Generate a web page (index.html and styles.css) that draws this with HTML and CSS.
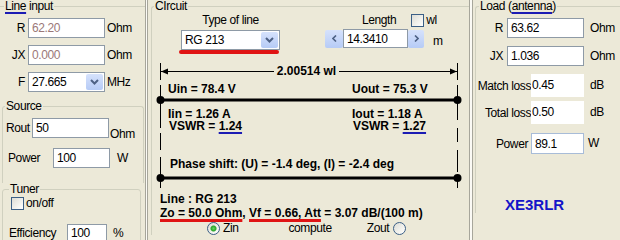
FILE: index.html
```html
<!DOCTYPE html>
<html lang="en">
<head>
  <meta charset="UTF-8">
  <meta name="viewport" content="width=device-width, initial-scale=1.0">
  <title>Transmission Line Calculator</title>
  <link rel="stylesheet" href="styles.css">
</head>
<body>

  <div class="window">

    <!-- Left side: line input, source, tuner -->
    <div class="panel panel-left">
      <fieldset class="group group-line">
        <legend><span class="ul-blue">Line</span> input</legend>
        <div class="rows">
          <div class="row">
            <span class="lbl-line">R</span>
            <input class="edit edit-line edit-dim" type="text" value="62.20" readonly>
            <span class="unit">Ohm</span>
          </div>
          <div class="row">
            <span class="lbl-line">JX</span>
            <input class="edit edit-line edit-dim" type="text" value="0.000" readonly>
            <span class="unit">Ohm</span>
          </div>
          <div class="row">
            <span class="lbl-line">F</span>
            <div class="combo combo-freq">
              <span class="combo-text">27.665</span>
              <span class="combo-btn">
                <svg width="9" height="6" viewBox="0 0 9 6"><path d="M1 1 L4.5 4.5 L8 1" fill="none" stroke="#4d6185" stroke-width="2"/></svg>
              </span>
            </div>
            <span class="unit">MHz</span>
          </div>
        </div>
      </fieldset>

      <fieldset class="group group-source">
        <legend>Source</legend>
        <div class="row row-rout">
          <span class="lbl-rout">Rout</span>
          <input class="edit edit-rout" type="text" value="50">
          <span class="unit unit-low">Ohm</span>
        </div>
        <div class="row row-power">
          <span class="lbl-power">Power</span>
          <input class="edit edit-power" type="text" value="100">
          <span class="unit unit-w">W</span>
        </div>
      </fieldset>

      <fieldset class="group group-tuner">
        <legend>Tuner</legend>
        <div class="row row-check">
          <span class="check"></span>
          <span class="check-text">on/off</span>
        </div>
        <div class="row row-eff">
          <span class="lbl-eff">Efficiency</span>
          <input class="edit edit-eff" type="text" value="100">
          <span class="unit unit-pct">%</span>
        </div>
      </fieldset>
    </div>

    <div class="splitter"></div>

    <!-- Middle: circuit drawing -->
    <div class="panel panel-circuit">
      <fieldset class="group group-circuit">
        <legend>CIrcuit</legend>

        <div class="circuit-head">
          <div class="line-type">
            <div class="caption">Type of line</div>
            <div class="combo combo-line">
              <span class="combo-text">RG 213</span>
              <span class="combo-btn">
                <svg width="9" height="6" viewBox="0 0 9 6"><path d="M1 1 L4.5 4.5 L8 1" fill="none" stroke="#4d6185" stroke-width="2"/></svg>
              </span>
            </div>
            <div class="red-mark"></div>
          </div>

          <div class="length">
            <div class="length-top">
              <span class="length-caption">Length</span>
              <span class="check check-wl"></span>
              <span class="check-text">wl</span>
            </div>
            <div class="spin-row">
              <span class="spin-btn spin-left">
                <svg width="5" height="7" viewBox="0 0 5 7"><path d="M4 0.5 L1 3.5 L4 6.5" fill="none" stroke="#4d6185" stroke-width="1.6"/></svg>
              </span>
              <input class="edit edit-length" type="text" value="14.3410">
              <span class="spin-btn spin-right">
                <svg width="5" height="7" viewBox="0 0 5 7"><path d="M1 0.5 L4 3.5 L1 6.5" fill="none" stroke="#4d6185" stroke-width="1.6"/></svg>
              </span>
              <span class="unit unit-m">m</span>
            </div>
          </div>
        </div>

        <div class="schematic">
          <svg class="wires" width="306" height="132" viewBox="0 0 306 132">
            <g stroke="#000" stroke-width="1" fill="none">
              <line x1="5" y1="11.5" x2="301" y2="11.5"/>
              <path d="M4.5 3 V20 M4.5 25 V37 M4.5 40 V68 M4.5 73 V90 M4.5 97 V115 M4.5 118 V128"/>
              <path d="M301.5 3 V20 M301.5 25 V37 M301.5 40 V60 M301.5 68 V82 M301.5 90 V112 M301.5 118 V128"/>
            </g>
            <polygon points="5,11.5 12,8.5 12,14.5"/>
            <polygon points="301,11.5 294,8.5 294,14.5"/>
            <g stroke="#000" stroke-width="3">
              <line x1="4" y1="40" x2="302" y2="40"/>
              <line x1="4" y1="118" x2="302" y2="118"/>
            </g>
            <circle cx="4.5" cy="40" r="4"/>
            <circle cx="301.5" cy="40" r="4"/>
            <circle cx="4.5" cy="118" r="4"/>
            <circle cx="301.5" cy="118" r="4"/>
          </svg>

          <div class="dimension"><span>2.00514 wl</span></div>
          <div class="readings">
            <span>Uin = 78.4 V</span>
            <span>Uout = 75.3 V</span>
          </div>
          <div class="readings readings-i">
            <span>Iin = 1.26 A</span>
            <span>Iout = 1.18 A</span>
          </div>
          <div class="readings readings-v">
            <span>VSWR = <span class="ul-blue">1.24</span></span>
            <span>VSWR = <span class="ul-blue">1.27</span></span>
          </div>
          <div class="phase">Phase shift: (U) = -1.4 deg, (I) = -2.4 deg</div>
        </div>

        <div class="line-info">
          <div>Line : RG 213</div>
          <div><span class="ul-red">Zo = 50.0 Ohm</span>, <span class="ul-red">Vf = 0.66, Att</span> = 3.07 dB/(100 m)</div>
        </div>

        <div class="compute-row">
          <span class="radio radio-on"></span>
          <span class="radio-text">Zin</span>
          <span class="compute">compute</span>
          <span class="radio-text zout-text">Zout</span>
          <span class="radio radio-zout"></span>
        </div>
      </fieldset>
    </div>

    <div class="splitter splitter-wide"></div>

    <!-- Right side: load -->
    <div class="panel panel-load">
      <fieldset class="group group-load">
        <legend>Load (<span class="ul-blue">antenna</span>)</legend>
        <div class="rows">
          <div class="row">
            <span class="lbl-load">R</span>
            <input class="edit edit-line" type="text" value="63.62">
            <span class="unit unit-load">Ohm</span>
          </div>
          <div class="row">
            <span class="lbl-load">JX</span>
            <input class="edit edit-line" type="text" value="1.036">
            <span class="unit unit-load">Ohm</span>
          </div>
          <div class="row row-loss">
            <span class="lbl-loss">Match loss</span>
            <span class="value-box">0.45</span>
            <span class="unit unit-load">dB</span>
          </div>
          <div class="row row-loss row-total">
            <span class="lbl-loss">Total loss</span>
            <span class="value-box">0.50</span>
            <span class="unit unit-load">dB</span>
          </div>
          <div class="row row-load-power">
            <span class="lbl-load-power">Power</span>
            <input class="edit edit-load-power" type="text" value="89.1">
            <span class="unit unit-load-w">W</span>
          </div>
        </div>
        <div class="callsign">XE3RLR</div>
      </fieldset>
    </div>

  </div>

</body>
</html>
```

FILE: styles.css
```css
/* styles.css */
body {
  margin: 0;
  width: 620px;
  height: 240px;
  overflow: hidden;
  background-color: #ece9d8;
  font-family: "Liberation Sans", Arial, sans-serif;
  font-size: 12px;
  letter-spacing: -0.4px;
  color: #000;
}

.window {
  display: flex;
  height: 240px;
  overflow: hidden;
}

.panel {
  flex: none;
  height: 240px;
  overflow: hidden;
}

.panel-left { width: 145px; }
.panel-circuit { width: 321px; }
.panel-load { width: 148px; }

.splitter {
  flex: none;
  width: 1px;
  border-left: 1px solid #a7a69b;
  border-right: 1px solid #a7a69b;
  background-color: #fbfaf5;
}

.splitter-wide {
  width: 2px;
}

/* group boxes */
.group {
  box-sizing: border-box;
  margin: 0;
  padding: 0;
  min-width: 0;
  border: 1px solid #d0d0bf;
  border-radius: 3px;
}

.group legend {
  padding: 0 1px;
  line-height: 13px;
}

.row {
  display: flex;
  align-items: center;
  height: 20px;
}

.rows {
  padding-top: 5px;
}

.unit {
  line-height: 13px;
  margin-left: 2px;
}

.ul-blue {
  text-decoration: underline;
  text-decoration-color: #1c1cb4;
  text-decoration-thickness: 2px;
  text-underline-offset: 2px;
  text-decoration-skip-ink: none;
}

.ul-red {
  text-decoration: underline;
  text-decoration-color: #e01414;
  text-decoration-thickness: 3px;
  text-underline-offset: 2px;
  text-decoration-skip-ink: none;
}

/* edit boxes */
.edit {
  box-sizing: border-box;
  height: 20px;
  margin: 0;
  padding: 0 3px;
  border: 1px solid #8e9aa6;
  background-color: #fff;
  font: inherit;
  letter-spacing: inherit;
  color: #000;
  outline: none;
}

.edit-line { width: 77px; }
.edit-dim { color: #9b7878; }

.combo {
  box-sizing: border-box;
  display: flex;
  height: 20px;
  padding: 1px;
  border: 1px solid #8e9aa6;
  background-color: #fff;
}

.combo-text {
  flex: 1;
  padding-left: 2px;
  line-height: 16px;
}

.combo-btn,
.spin-btn {
  display: flex;
  align-items: center;
  justify-content: center;
  border-radius: 2px;
  background: linear-gradient(#d6e2fc, #b6cbf6);
}

.combo-btn { width: 17px; }

.check {
  box-sizing: border-box;
  width: 13px;
  height: 13px;
  border: 1px solid #3b5f86;
  background: linear-gradient(135deg, #dcdcd5 0%, #f4f4f0 65%, #fff 100%);
}

.radio {
  box-sizing: border-box;
  width: 13px;
  height: 13px;
  border: 1px solid #3b5f86;
  border-radius: 50%;
  background: linear-gradient(135deg, #dcdcd5 0%, #f4f4f0 65%, #fff 100%);
}

.radio-on {
  background: radial-gradient(circle, #63d663 0, #2aa52a 2.5px, rgba(0, 0, 0, 0) 3.5px),
    linear-gradient(135deg, #dcdcd5 0%, #f4f4f0 65%, #fff 100%);
}

/* left panel */
.group-line {
  border-width: 1px 0 0 0;
  border-radius: 0;
}

.group-line legend { margin-left: 4px; }
.group-line .row { margin-bottom: 7px; }

.lbl-line {
  width: 25px;
  margin-right: 3px;
  text-align: right;
}

.combo-freq { width: 77px; }

.group-source {
  width: 142px;
  height: 83px;
  margin: 1px 0 0 2px;
  border-bottom: 0;
  border-radius: 3px 3px 0 0;
}

.group-source legend { margin-left: 2px; }

.row-rout {
  margin-top: 5px;
  padding-left: 3px;
}

.lbl-rout { width: 26px; }
.edit-rout { width: 77px; }

.unit-low {
  align-self: flex-end;
  margin-left: 1px;
  margin-bottom: -3px;
}

.row-power {
  margin-top: 10px;
  padding-left: 5px;
}

.lbl-power { width: 45px; }
.edit-power { width: 57px; }
.unit-w { margin-left: 7px; }

.group-tuner {
  width: 139px;
  height: 70px;
  margin-left: 2px;
}

.group-tuner legend { margin-left: 6px; }

.row-check {
  height: 13px;
  margin-top: 1px;
  padding-left: 8px;
}

.check-text {
  margin-left: 2px;
  line-height: 13px;
}

.row-eff {
  height: 18px;
  margin-top: 14px;
  padding-left: 6px;
}

.lbl-eff { width: 58px; }

.edit-eff {
  width: 40px;
  height: 18px;
}

.unit-pct { margin-left: 6px; }

/* circuit panel */
.group-circuit {
  width: 318px;
  margin-left: 3px;
  border-width: 1px 0 0 1px;
  border-radius: 3px 0 0 0;
}

.group-circuit legend { margin-left: 2px; }

.circuit-head {
  display: flex;
  align-items: flex-start;
}

.line-type {
  width: 99px;
  margin-left: 29px;
}

.caption {
  margin-top: 1px;
  line-height: 13px;
  text-align: center;
}

.combo-line { margin-top: 3px; }

.red-mark {
  width: 100px;
  height: 4px;
  margin-left: -2px;
  border-radius: 2px;
  background-color: #e01414;
}

.length { margin-left: 45px; }

.length-top {
  display: flex;
  align-items: center;
  height: 14px;
}

.length-caption {
  margin-left: 37px;
  line-height: 13px;
}

.check-wl { margin-left: 15px; }

.spin-row {
  display: flex;
  align-items: center;
  height: 19px;
  margin-top: 2px;
}

.spin-btn {
  height: 18px;
}

.spin-left { width: 18px; }
.spin-right { width: 16px; }

.edit-length {
  width: 65px;
  height: 19px;
}

.unit-m {
  margin-left: 9px;
  margin-top: 5px;
}

/* schematic drawing */
.schematic {
  position: relative;
  z-index: 0;
  box-sizing: border-box;
  width: 306px;
  height: 132px;
  margin: 6px 0 0 4px;
  padding-top: 5px;
  font-size: 12px;
  font-weight: bold;
  letter-spacing: normal;
  line-height: 12px;
}

.wires {
  position: absolute;
  top: 0;
  left: 0;
  z-index: -1;
}

.dimension {
  padding-right: 5px;
  text-align: center;
}

.dimension span {
  padding: 0 3px;
  background-color: #ece9d8;
}

.readings {
  display: grid;
  grid-template-columns: 184px auto;
  margin-top: 6px;
  padding-left: 12px;
}

.readings-i { margin-top: 13px; }

.readings-v {
  margin-top: 0;
  padding-left: 13px;
}

.phase {
  margin-top: 26px;
  padding-left: 14px;
}

.line-info {
  padding-left: 8px;
  font-size: 12px;
  font-weight: bold;
  letter-spacing: normal;
  line-height: 14px;
}

.compute-row {
  display: flex;
  align-items: center;
  height: 14px;
  margin-top: 1px;
  padding-left: 55px;
  line-height: 13px;
}

.radio-text { margin-left: 3px; }
.compute { margin-left: 50px; }
.zout-text { margin-left: 35px; }
.radio-zout { margin-left: 4px; }

/* load panel */
.group-load {
  width: 146px;
  margin-left: 2px;
  border-width: 1px 0 0 1px;
  border-radius: 3px 0 0 0;
}

.group-load legend { margin-left: 3px; }
.group-load .row { margin-bottom: 8px; }

.lbl-load {
  width: 27px;
  margin-right: 4px;
  text-align: right;
}

.unit-load { margin-left: 6px; }

.group-load .row-loss {
  height: 23px;
  margin-bottom: 4px;
}

.group-load .row-total { margin-bottom: 9px; }

.lbl-loss {
  width: 55px;
  text-align: right;
  white-space: nowrap;
}

.value-box {
  box-sizing: border-box;
  width: 53px;
  height: 23px;
  padding-left: 1px;
  line-height: 23px;
  background-color: #fff;
}

.group-load .row-load-power { height: 21px; }

.lbl-load-power {
  width: 52px;
  margin-right: 3px;
  text-align: right;
}

.edit-load-power {
  width: 53px;
  height: 21px;
  border-color: #a8bcd8;
}

.unit-load-w { margin-left: 4px; }

.callsign {
  margin: 42px 0 0 29px;
  color: #1414c8;
  font-size: 15px;
  font-weight: bold;
  letter-spacing: normal;
  line-height: 17px;
}
```
